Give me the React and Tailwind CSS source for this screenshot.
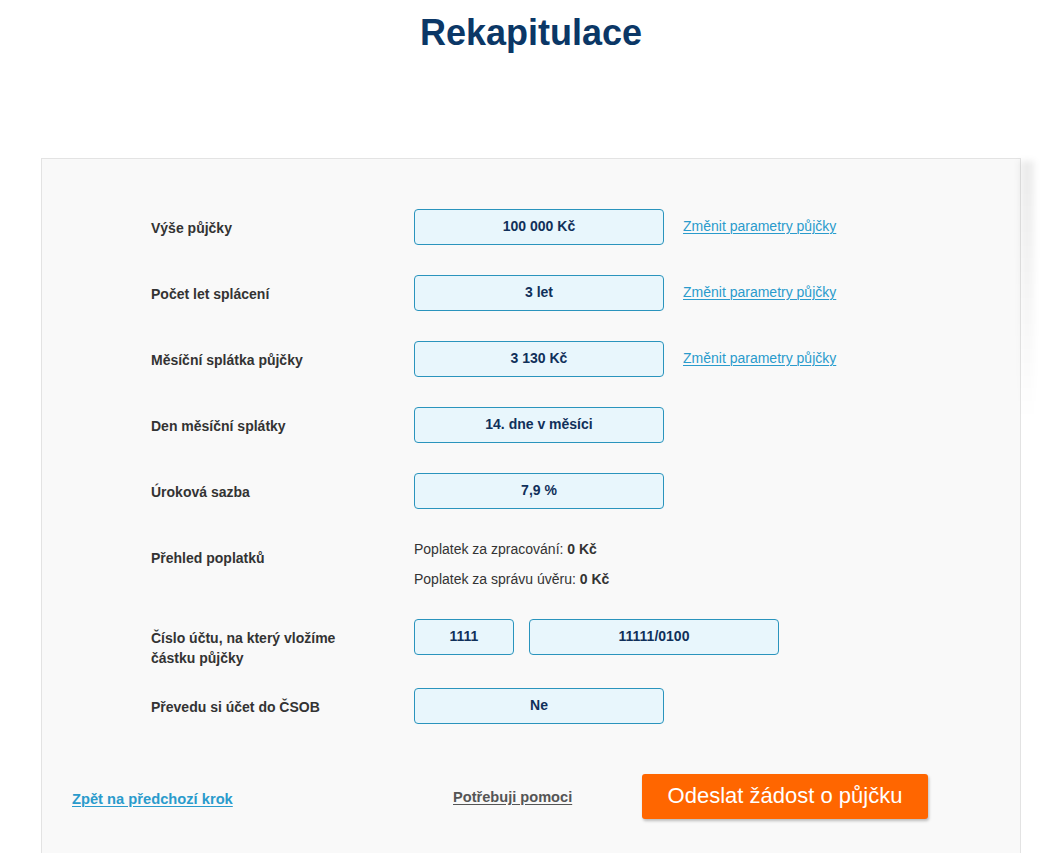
import React from "react";

const font = { fontFamily: '"Liberation Sans", Arial, sans-serif' };

function Box({ children, w = "w-[250px]" }) {
  return (
    <div className={`${w} h-[36px] shrink-0 rounded-[4px] border border-[#2a94bd] bg-[#e8f6fc] flex items-center justify-center pb-[2px] text-[14px] font-bold text-[#10305a]`}>
      {children}
    </div>
  );
}

function Label({ children }) {
  return (
    <div className="w-[263px] shrink-0 pt-[9px] leading-[20px] text-[14px] font-bold text-[#333333]">
      {children}
    </div>
  );
}

function ChangeLink() {
  return (
    <a href="#" className="ml-[19px] pb-[2px] text-[14px] text-[#2a9bcc] underline underline-offset-2 decoration-1">
      Změnit parametry půjčky
    </a>
  );
}

function Row({ label, value, link, className = "" }) {
  return (
    <div className={`flex items-start ${className}`}>
      <Label>{label}</Label>
      <div className="flex items-center">
        <Box>{value}</Box>
        {link && <ChangeLink />}
      </div>
    </div>
  );
}

export default function App() {
  return (
    <div className="min-h-[853px] bg-white" style={font}>
      <div className="ml-[41px] w-[980px]">
        <h1 className="pt-[11px] text-center text-[36px] leading-[44px] font-bold text-[#0b3766]">
          Rekapitulace
        </h1>
        <div className="relative mt-[103px] border border-[#e3e3e3] bg-[#f9f9f9] pb-[60px]">
          <div className="pointer-events-none absolute right-[-14px] top-[2px] h-[260px] w-[14px] bg-linear-to-b from-[#00000014] to-transparent blur-[3px]" />
          <div className="pl-[109px] pt-[50px]">
            <Row label="Výše půjčky" value="100 000 Kč" link className="mb-[30px]" />
            <Row label="Počet let splácení" value="3 let" link className="mb-[30px]" />
            <Row label="Měsíční splátka půjčky" value="3 130 Kč" link className="mb-[30px]" />
            <Row label="Den měsíční splátky" value="14. dne v měsíci" className="mb-[30px]" />
            <Row label="Úroková sazba" value="7,9 %" className="mb-[30px]" />
            <div className="flex items-start mb-[30px]">
              <Label>Přehled poplatků</Label>
              <div className="text-[14px] leading-[20px] text-[#333333]">
                <div>
                  Poplatek za zpracování: <b>0 Kč</b>
                </div>
                <div className="mt-[10px]">
                  Poplatek za správu úvěru: <b>0 Kč</b>
                </div>
              </div>
            </div>
            <div className="flex items-start mb-[20px]">
              <Label>
                Číslo účtu, na který vložíme
                <br />
                částku půjčky
              </Label>
              <div className="flex items-center gap-[15px]">
                <Box w="w-[100px]">1111</Box>
                <Box>11111/0100</Box>
              </div>
            </div>
            <Row label="Převedu si účet do ČSOB" value="Ne" />
          </div>
          <div className="mt-[50px] flex items-center pl-[30px]">
            <div className="w-[381px] pt-[4px]">
              <a href="#" className="text-[14.7px] font-bold text-[#2a9bcc] underline underline-offset-2">
                Zpět na předchozí krok
              </a>
            </div>
            <div className="w-[189px]">
              <a href="#" className="text-[14.6px] font-bold text-[#555555] underline underline-offset-2">
                Potřebuji pomoci
              </a>
            </div>
            <button className="h-[45px] w-[286px] rounded-[3px] bg-[#ff6600] pb-[2px] text-[22px] text-white shadow-[1px_2px_3px_rgba(0,0,0,0.25)]">
              Odeslat žádost o půjčku
            </button>
          </div>
        </div>
      </div>
    </div>
  );
}
